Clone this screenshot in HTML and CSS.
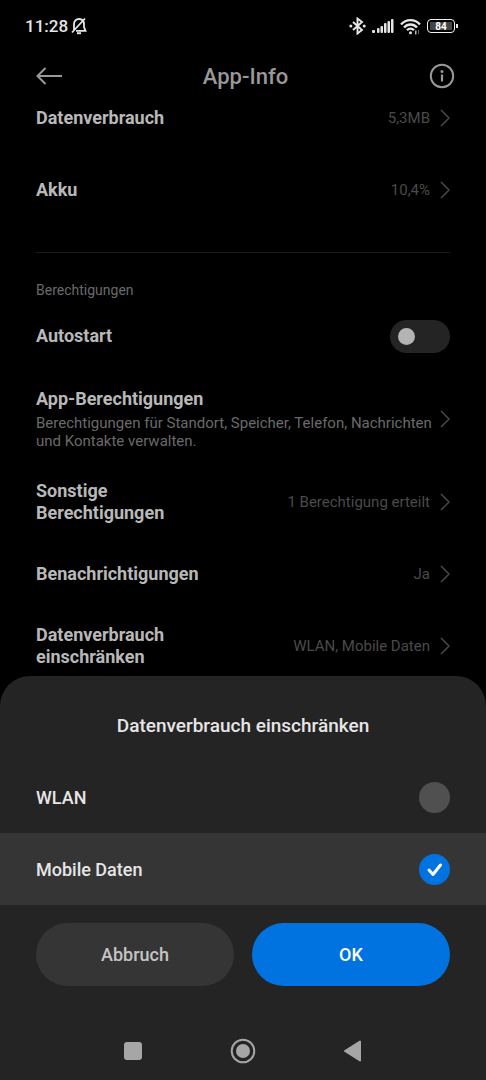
FILE: index.html
```html
<!DOCTYPE html>
<html lang="de">
<head>
    <meta charset="utf-8">
    <meta name="viewport" content="width=device-width, initial-scale=1">
    <title>App-Info</title>
    <link rel="stylesheet" href="styles.css">
</head>
<body>
    <div class="status-bar">
        <div class="status-left">
            <span>11:28</span>
            <svg width="16" height="18" viewBox="0 0 16 18" fill="none" stroke="#e6e6e6" stroke-width="1.8">
                <path d="M3 13V7.500C3 4 5 2 8 2s5 2 5 5.500V10l1.500 3.800H5M1 15.500L14 1.500"/>
                <path d="M6 16.200h4" stroke-width="2"/>
            </svg>
        </div>
        <div class="status-right">
            <svg width="17" height="18" viewBox="0 0 17 18" fill="none" stroke="#e6e6e6" stroke-width="1.900">
                <path d="M4 5l9 8-4.500 3.500v-15L13 5l-9 8"/>
                <circle cx="1.800" cy="9" r="1.500" fill="#e6e6e6" stroke="none"/>
                <circle cx="15.200" cy="9" r="1.500" fill="#e6e6e6" stroke="none"/>
            </svg>
            <svg width="22" height="16" viewBox="0 0 22 16" fill="#e6e6e6">
                <rect x="0" y="12" width="3" height="3" rx="1"/>
                <rect x="5" y="10" width="2.500" height="5" rx="1"/>
                <rect x="8.500" y="8" width="2.500" height="7" rx="1"/>
                <rect x="12" y="5" width="2.500" height="10" rx="1"/>
                <rect x="15.500" y="3" width="2.500" height="12" rx="1"/>
                <rect x="19" y="1" width="2.500" height="14" rx="1"/>
            </svg>
            <svg width="21" height="17" viewBox="0 0 21 17" fill="none" stroke="#e6e6e6" stroke-width="2.300">
                <path d="M1 6.500C6 .7 15 .7 20 6.500M4 9.500c3.500-4 9.500-4 13 0M7 12.300c2-2.200 5-2.200 7 0"/>
                <circle cx="10.500" cy="14.700" r="1.500" fill="#e6e6e6" stroke="none"/>
                <path d="M15.800 12.500v4" stroke-width="1.200"/>
                <path d="M18.500 12v4" stroke-width="1" stroke="#666"/>
            </svg>
            <div class="battery"><span>84</span></div>
        </div>
    </div>

    <header class="header">
        <button class="icon-button back-button" aria-label="Zurück">
            <svg width="26" height="18" viewBox="0 0 26 18" fill="none" stroke="#999" stroke-width="2">
                <path d="M26 9H1.500M9.500 1L1.500 9l8 8"/>
            </svg>
        </button>
        <h1>App-Info</h1>
        <button class="icon-button" aria-label="Info">
            <svg width="26" height="26" viewBox="0 0 26 26" fill="none" stroke="#999" stroke-width="2">
                <circle cx="13" cy="13" r="11.200"/>
                <path d="M13 11.500v7" stroke-width="2.200"/>
                <circle cx="13" cy="8.500" r="1.500" fill="#999" stroke="none"/>
            </svg>
        </button>
    </header>

    <main class="settings">
        <a href="#" class="row">
            <span class="label">Datenverbrauch</span>
            <span class="value">5,3MB</span>
            <svg class="chevron" viewBox="0 0 10 18"><path d="M1 1l8 8-8 8"/></svg>
        </a>
        <a href="#" class="row">
            <span class="label">Akku</span>
            <span class="value">10,4%</span>
            <svg class="chevron" viewBox="0 0 10 18"><path d="M1 1l8 8-8 8"/></svg>
        </a>
        <hr class="divider">
        <h2>Berechtigungen</h2>
        <div class="row">
            <label class="label" for="autostart">Autostart</label>
            <input type="checkbox" role="switch" id="autostart" class="switch">
        </div>
        <a href="#" class="row row-tall">
            <span class="text">
                <span class="label">App-Berechtigungen</span>
                <span class="description">Berechtigungen für Standort, Speicher, Telefon, Nachrichten und Kontakte verwalten.</span>
            </span>
            <svg class="chevron" viewBox="0 0 10 18"><path d="M1 1l8 8-8 8"/></svg>
        </a>
        <a href="#" class="row">
            <span class="label">Sonstige Berechtigungen</span>
            <span class="value">1 Berechtigung erteilt</span>
            <svg class="chevron" viewBox="0 0 10 18"><path d="M1 1l8 8-8 8"/></svg>
        </a>
        <a href="#" class="row">
            <span class="label">Benachrichtigungen</span>
            <span class="value">Ja</span>
            <svg class="chevron" viewBox="0 0 10 18"><path d="M1 1l8 8-8 8"/></svg>
        </a>
        <a href="#" class="row">
            <span class="label">Datenverbrauch einschränken</span>
            <span class="value">WLAN, Mobile Daten</span>
            <svg class="chevron" viewBox="0 0 10 18"><path d="M1 1l8 8-8 8"/></svg>
        </a>
    </main>

    <div class="sheet" role="dialog" aria-labelledby="sheetTitle">
        <h2 class="sheet-title" id="sheetTitle">Datenverbrauch einschränken</h2>
        <label class="option">
            <span>WLAN</span>
            <span class="check">
                <input type="checkbox">
                <svg width="31" height="31" viewBox="0 0 31 31"><path d="M10 16l4 4.500 7.500-9.500"/></svg>
            </span>
        </label>
        <label class="option">
            <span>Mobile Daten</span>
            <span class="check">
                <input type="checkbox" checked>
                <svg width="31" height="31" viewBox="0 0 31 31"><path d="M10 16l4 4.500 7.500-9.500"/></svg>
            </span>
        </label>
        <div class="actions">
            <button class="button">Abbruch</button>
            <button class="button button-primary">OK</button>
        </div>
        <nav class="nav-bar">
            <button class="icon-button" aria-label="Letzte Apps">
                <svg width="26" height="26" viewBox="0 0 26 26" fill="#a6a6a6"><rect x="4" y="4" width="18" height="18" rx="3"/></svg>
            </button>
            <button class="icon-button" aria-label="Startseite">
                <svg width="26" height="26" viewBox="0 0 26 26" fill="#a6a6a6">
                    <circle cx="13" cy="13" r="11.300" fill="none" stroke="#a6a6a6" stroke-width="2"/>
                    <circle cx="13" cy="13" r="7"/>
                </svg>
            </button>
            <button class="icon-button" aria-label="Zurück">
                <svg width="26" height="26" viewBox="0 0 26 26" fill="#a6a6a6" stroke="#a6a6a6" stroke-width="2" stroke-linejoin="round"><path d="M20 3.500v19L5 13z"/></svg>
            </button>
        </nav>
    </div>
</body>
</html>
```

FILE: styles.css
```css
* {
    box-sizing: border-box;
}
body {
    margin: 0;
    min-height: 100vh;
    background-color: #000;
    color: #b8b8b8;
    font-family: Roboto, "Noto Sans", sans-serif;
    font-size: 18px;
}
h1, h2 {
    margin: 0;
}
svg {
    display: block;
    flex-shrink: 0;
}
button {
    border: none;
    padding: 0;
    font-family: inherit;
    cursor: pointer;
}
.icon-button {
    background: none;
}

/* Status bar */
.status-bar {
    display: flex;
    justify-content: space-between;
    align-items: center;
    height: 52px;
    padding: 0 31px 0 25px;
    color: #e6e6e6;
    font-size: 17px;
    font-weight: 500;
}
.status-left {
    display: flex;
    align-items: center;
    gap: 3px;
}
.status-right {
    display: flex;
    align-items: center;
    gap: 6px;
}
.battery {
    position: relative;
    display: flex;
    width: 28px;
    height: 14px;
    padding: 2px;
    border: 1px solid #f0f0f0;
    border-radius: 4px;
}
.battery span {
    flex: 1;
    background-color: #444;
    color: #fff;
    font-size: 10px;
    font-weight: 700;
    line-height: 9px;
    text-align: center;
}
.battery::after {
    content: "";
    position: absolute;
    top: 4px;
    right: -4px;
    width: 2px;
    height: 4px;
    background-color: #e6e6e6;
}

/* Title bar */
.header {
    display: flex;
    justify-content: space-between;
    align-items: center;
    height: 48px;
    padding: 0 31px;
}
.header h1 {
    color: #999;
    font-size: 22px;
    font-weight: 500;
}
.back-button {
    padding-left: 5px;
}

/* Settings list, scrolled a little under the title bar */
.settings {
    margin-top: -18px;
    padding: 0 36px;
}
.settings h2 {
    padding: 28px 0 1px;
    color: #6a6a6a;
    font-size: 14px;
    font-weight: 400;
    line-height: 18px;
}
.row {
    display: flex;
    align-items: center;
    justify-content: space-between;
    min-height: 72px;
    color: inherit;
    text-decoration: none;
}
.row-tall {
    min-height: 94px;
}
.label {
    max-width: 170px;
    font-weight: 700;
    line-height: 22px;
}
.text {
    display: flex;
    flex-direction: column;
    flex: 1;
    gap: 4px;
}
.text .label {
    max-width: none;
}
.description {
    color: #6a6a6a;
    font-size: 15px;
    line-height: 18px;
}
.value {
    margin-left: auto;
    color: #4a4a4a;
    font-size: 15px;
}
.chevron {
    width: 10px;
    height: 18px;
    margin-left: 10px;
    fill: none;
    stroke: #4a4a4a;
    stroke-width: 1.5;
}
.text + .chevron {
    margin-left: 8px;
}
.divider {
    height: 1px;
    margin: 26px 0 0;
    border: none;
    background-color: #1a1a1a;
}
.switch {
    appearance: none;
    display: flex;
    align-items: center;
    width: 60px;
    height: 33px;
    margin: 0;
    padding: 0 8px;
    border-radius: 17px;
    background-color: #242424;
}
.switch::before {
    content: "";
    width: 17px;
    height: 17px;
    border-radius: 50%;
    background-color: #b4b4b4;
}
.switch:checked {
    justify-content: flex-end;
}

/* Bottom sheet */
.sheet {
    position: fixed;
    left: 0;
    right: 0;
    bottom: 0;
    border-radius: 30px 30px 0 0;
    background-color: #242424;
    color: #e6e6e6;
}
.sheet-title {
    padding: 38px 36px 23px;
    font-size: 19px;
    font-weight: 500;
    line-height: 24px;
    text-align: center;
}
.option {
    display: flex;
    justify-content: space-between;
    align-items: center;
    height: 72px;
    padding: 0 36px;
    font-weight: 500;
}
.option:has(input:checked) {
    background-color: #353535;
}
.check {
    display: grid;
}
.check input,
.check svg {
    grid-area: 1 / 1;
}
.check input {
    appearance: none;
    width: 31px;
    height: 31px;
    margin: 0;
    border-radius: 50%;
    background-color: #505050;
}
.check svg {
    visibility: hidden;
    fill: none;
    stroke: #fff;
    stroke-width: 3;
    stroke-linecap: round;
    stroke-linejoin: round;
    pointer-events: none;
}
.check input:checked {
    background-color: #0073e0;
}
.check input:checked + svg {
    visibility: visible;
}
.actions {
    display: flex;
    gap: 18px;
    padding: 18px 36px 36px;
}
.button {
    flex: 1;
    height: 63px;
    border-radius: 32px;
    background-color: #353535;
    color: #c4c4c4;
    font-size: 18px;
    font-weight: 500;
}
.button-primary {
    background-color: #0073e0;
    color: #fff;
}
.nav-bar {
    display: flex;
    justify-content: center;
    align-items: center;
    gap: 84px;
    height: 58px;
}
```
